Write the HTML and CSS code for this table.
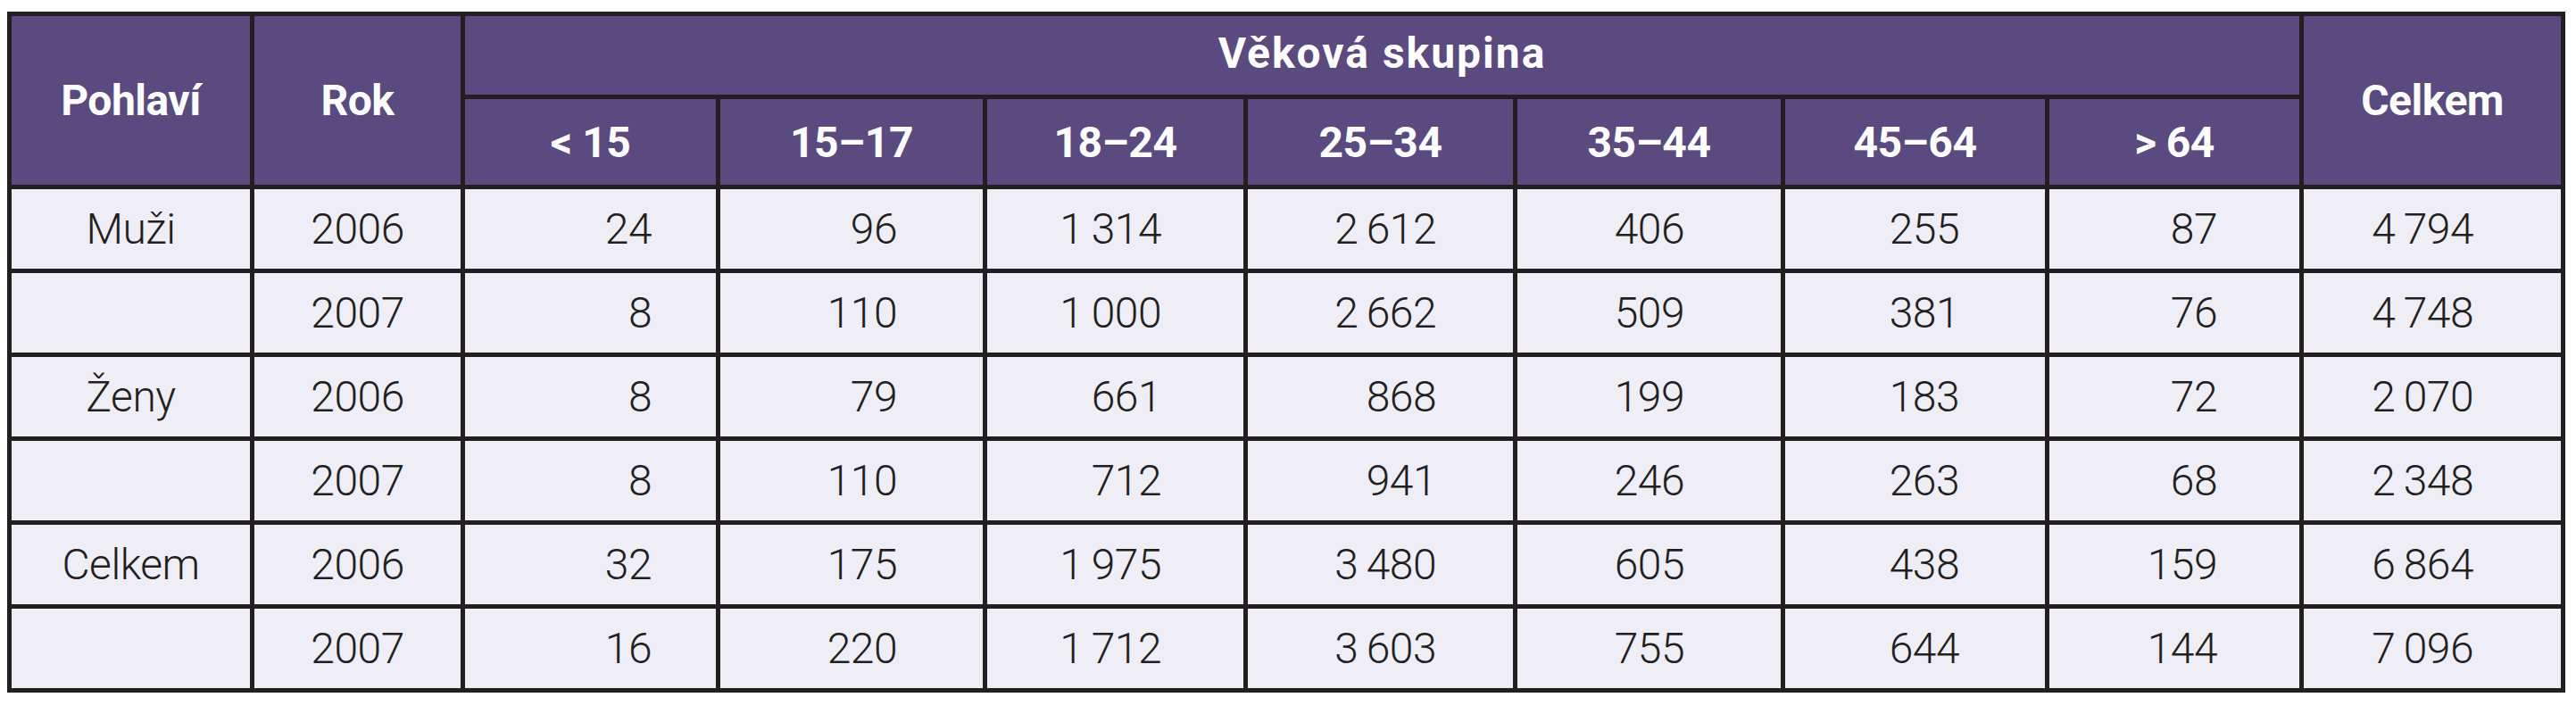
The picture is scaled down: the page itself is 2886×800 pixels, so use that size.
FILE: index.html
```html
<!DOCTYPE html>
<html lang="cs">
<head>
<meta charset="utf-8">
<title>Věková skupina</title>
<link rel="stylesheet" href="styles.css">
</head>
<body>
<table class="stats">
  <colgroup>
    <col class="c-sex"><col class="c-year"><col class="c-a1"><col class="c-a2"><col class="c-a3"><col class="c-a4"><col class="c-a5"><col class="c-a6"><col class="c-a7"><col class="c-total">
  </colgroup>
  <thead>
    <tr class="h1">
      <th rowspan="2">Pohlaví</th>
      <th rowspan="2">Rok</th>
      <th colspan="7" class="group">Věková skupina</th>
      <th rowspan="2">Celkem</th>
    </tr>
    <tr class="h2">
      <th>&lt; 15</th>
      <th>15–17</th>
      <th>18–24</th>
      <th>25–34</th>
      <th>35–44</th>
      <th>45–64</th>
      <th>&gt; 64</th>
    </tr>
  </thead>
  <tbody>
    <tr><td class="lbl">Muži</td><td class="yr">2006</td><td>24</td><td>96</td><td>1&#8201;314</td><td>2&#8201;612</td><td>406</td><td>255</td><td>87</td><td>4&#8201;794</td></tr>
    <tr><td class="lbl"></td><td class="yr">2007</td><td>8</td><td>110</td><td>1&#8201;000</td><td>2&#8201;662</td><td>509</td><td>381</td><td>76</td><td>4&#8201;748</td></tr>
    <tr><td class="lbl">Ženy</td><td class="yr">2006</td><td>8</td><td>79</td><td>661</td><td>868</td><td>199</td><td>183</td><td>72</td><td>2&#8201;070</td></tr>
    <tr><td class="lbl"></td><td class="yr">2007</td><td>8</td><td>110</td><td>712</td><td>941</td><td>246</td><td>263</td><td>68</td><td>2&#8201;348</td></tr>
    <tr><td class="lbl">Celkem</td><td class="yr">2006</td><td>32</td><td>175</td><td>1&#8201;975</td><td>3&#8201;480</td><td>605</td><td>438</td><td>159</td><td>6&#8201;864</td></tr>
    <tr><td class="lbl"></td><td class="yr">2007</td><td>16</td><td>220</td><td>1&#8201;712</td><td>3&#8201;603</td><td>755</td><td>644</td><td>144</td><td>7&#8201;096</td></tr>
  </tbody>
</table>
</body>
</html>
```

FILE: styles.css
```css
html, body {
  margin: 0;
  padding: 0;
  background: #ffffff;
}

body {
  padding: 13px 0 0 8px;
  font-family: Roboto, "Liberation Sans", sans-serif;
}

.stats {
  border-collapse: collapse;
  table-layout: fixed;
  width: 2865px;
  border: 5px solid #231f20;
}

.c-sex { width: 272px; }
.c-year { width: 236px; }
.c-a1 { width: 286px; }
.c-a2 { width: 299px; }
.c-a3 { width: 292px; }
.c-a4 { width: 302px; }
.c-a5 { width: 300px; }
.c-a6 { width: 296px; }
.c-a7 { width: 285px; }
.c-total { width: 293px; }

.stats th,
.stats td {
  border: 5px solid #231f20;
  padding: 0;
  vertical-align: middle;
}

.stats th {
  background: #5a4a80;
  color: #ffffff;
  font-weight: 700;
  font-size: 48px;
  text-align: center;
  letter-spacing: -0.5px;
}

.stats .h1 th {
  height: 82px;
}

.stats .h1 .group {
  letter-spacing: 2px;
  padding-bottom: 6px;
}

.stats .h2 th {
  height: 96px;
}

.stats td {
  background: #efeef7;
  color: #231f20;
  font-size: 48px;
  font-weight: 300;
  height: 89px;
  text-align: right;
  letter-spacing: -0.5px;
}

.stats td.lbl,
.stats td.yr {
  text-align: center;
}

.stats td:nth-child(3) { padding-right: 72px; }
.stats td:nth-child(4) { padding-right: 96px; }
.stats td:nth-child(5) { padding-right: 92px; }
.stats td:nth-child(6) { padding-right: 86px; }
.stats td:nth-child(7) { padding-right: 108px; }
.stats td:nth-child(8) { padding-right: 96px; }
.stats td:nth-child(9) { padding-right: 92px; }
.stats td:nth-child(10) { padding-right: 98px; }
```
